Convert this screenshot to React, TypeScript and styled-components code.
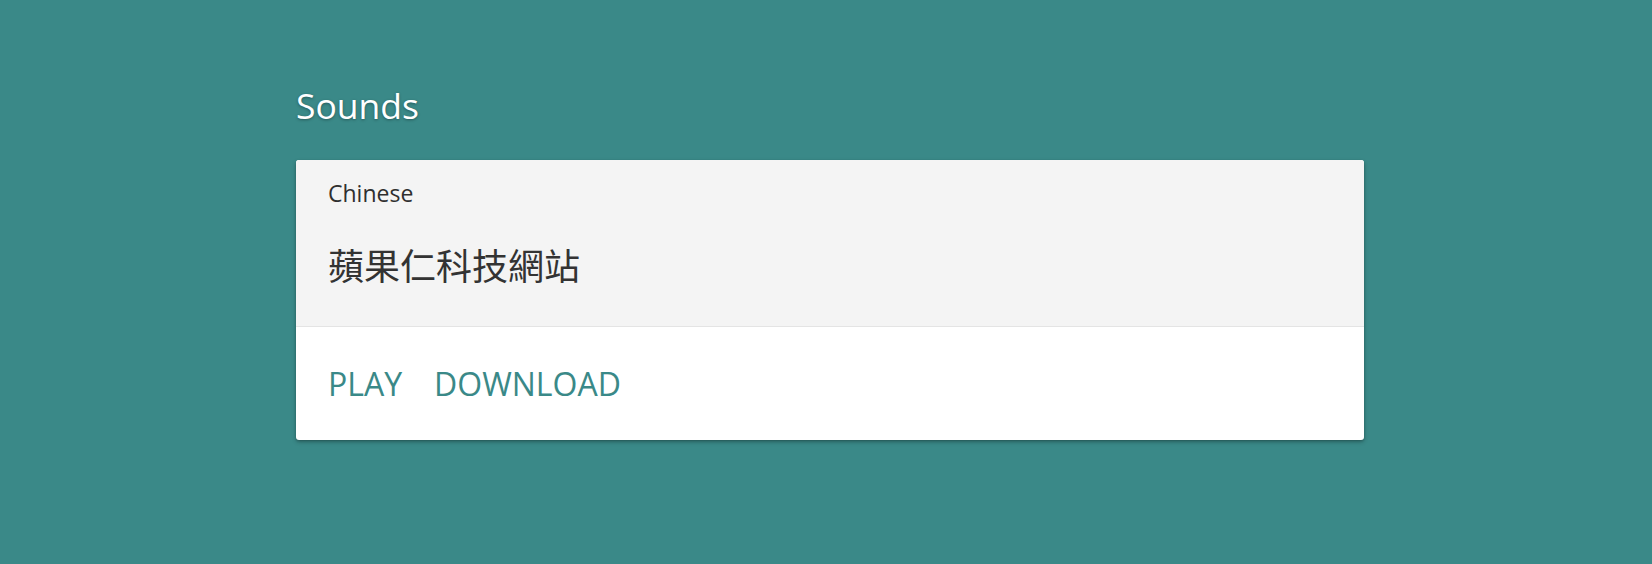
import React from "react";
import styled, { createGlobalStyle } from "styled-components";

const Global = createGlobalStyle`
  html, body {
    margin: 0;
    padding: 0;
    background: #3a8988;
  }
  body {
    font-family: "Open Sans", "Noto Sans", "Noto Sans CJK TC", sans-serif;
  }
`;

const Page = styled.main`
  width: 1652px;
  height: 564px;
  box-sizing: border-box;
  padding: 84px 0 0 296px;
`;

const Title = styled.h1`
  margin: 0 0 34px;
  font-size: 35.5px;
  line-height: 42px;
  font-weight: 400;
  color: #ffffff;
  text-shadow: 0 1px 3px rgba(0, 0, 0, 0.35);
`;

const Card = styled.section`
  width: 1068px;
  border-radius: 3px;
  overflow: hidden;
  background: #ffffff;
  box-shadow: 0 2px 4px rgba(0, 0, 0, 0.28), 0 1px 2px rgba(0, 0, 0, 0.15);
`;

const Header = styled.div`
  background: #f4f4f4;
  padding: 17px 32px 35px;
  border-bottom: 1px solid #e4e4e4;
`;

const Language = styled.div`
  font-size: 23px;
  line-height: 32px;
  color: #2f2f2f;
`;

const Phrase = styled.div`
  margin-top: 34px;
  font-family: "Open Sans", "Noto Sans CJK TC", sans-serif;
  font-size: 36px;
  line-height: 48px;
  color: #333333;
`;

const Actions = styled.div`
  display: flex;
  gap: 32px;
  padding: 37px 32px 36px;
`;

const Action = styled.button`
  border: none;
  background: none;
  padding: 0;
  font-family: "Open Sans", sans-serif;
  font-size: 32px;
  line-height: 40px;
  color: #3a8988;
  text-transform: uppercase;
  cursor: pointer;
`;

export default function App() {
  return (
    <>
      <Global />
      <Page>
        <Title>Sounds</Title>
        <Card>
          <Header>
            <Language>Chinese</Language>
            <Phrase>蘋果仁科技網站</Phrase>
          </Header>
          <Actions>
            <Action>Play</Action>
            <Action>Download</Action>
          </Actions>
        </Card>
      </Page>
    </>
  );
}
